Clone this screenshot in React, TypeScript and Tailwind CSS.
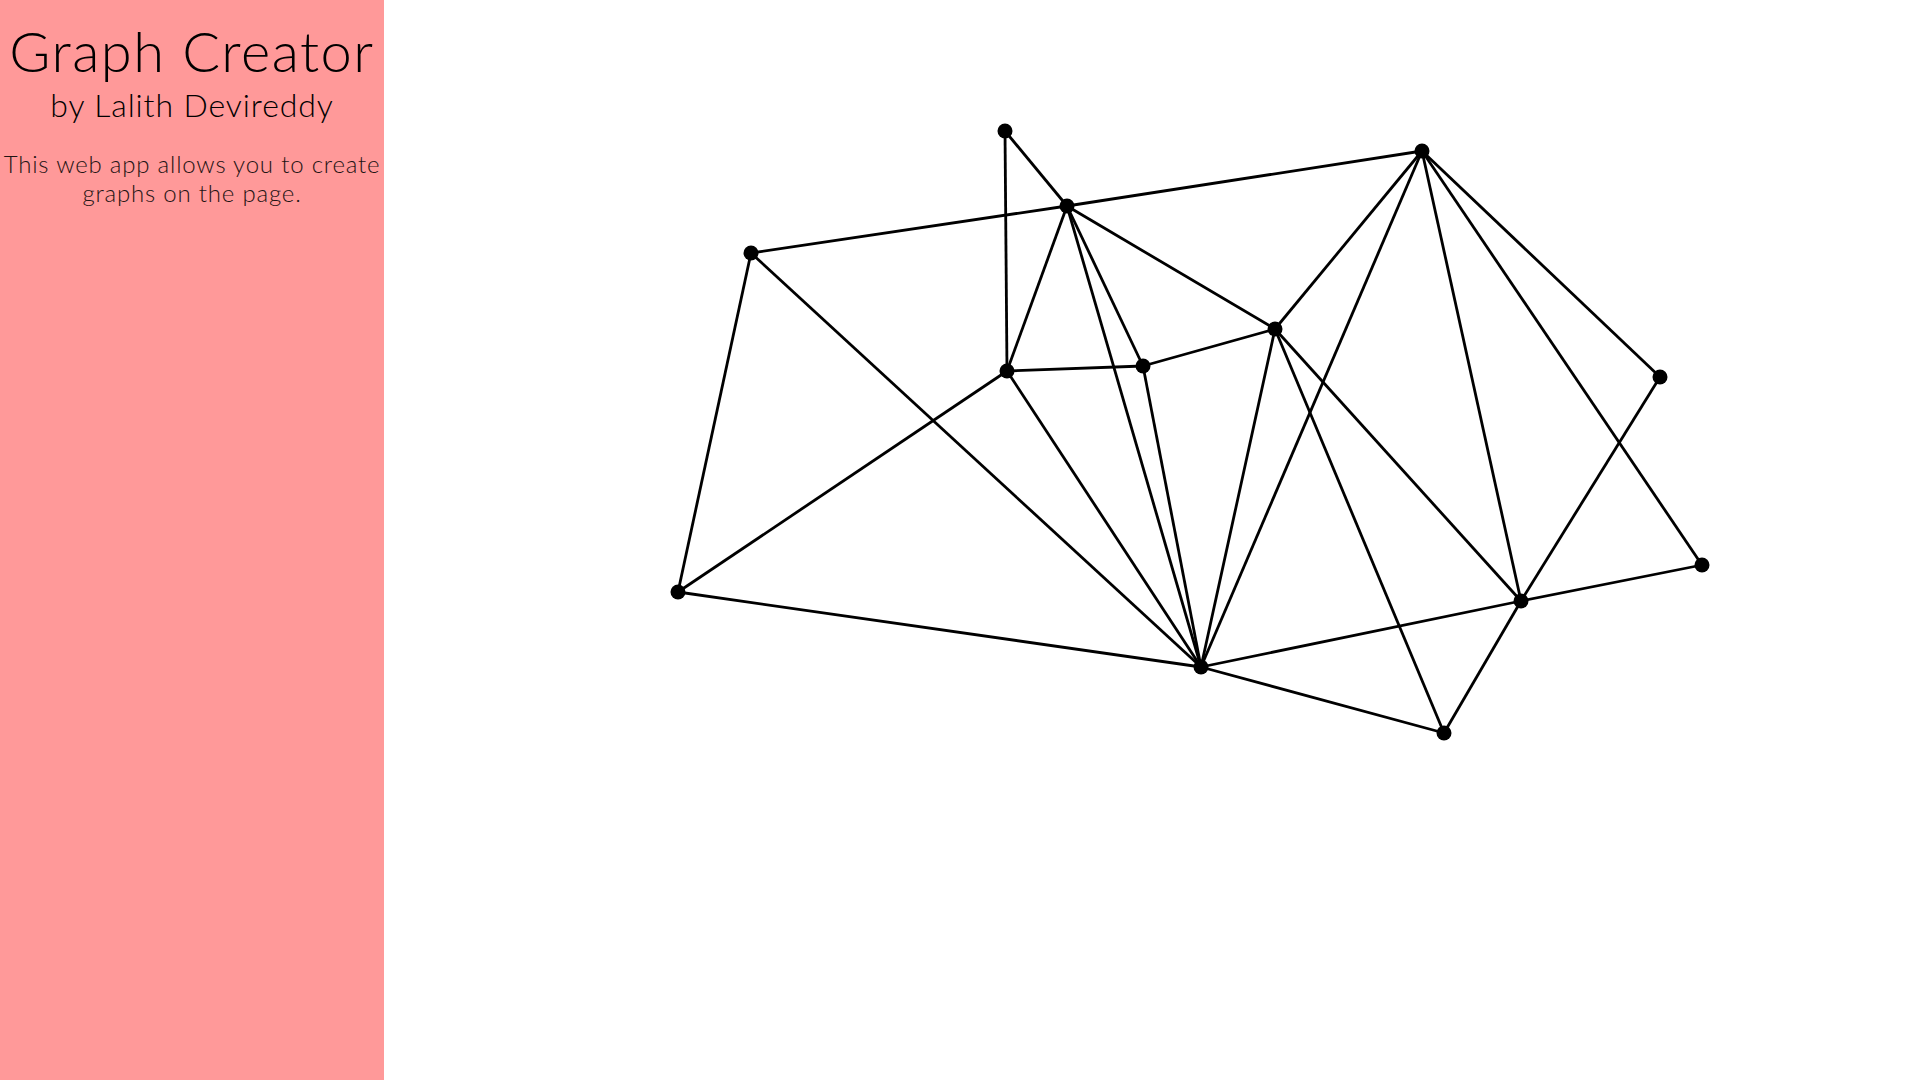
import React from "react";

type Node = { id: string; x: number; y: number };

const NODES: Node[] = [
  { id: "A", x: 1005, y: 131 },
  { id: "B", x: 1067, y: 206 },
  { id: "C", x: 1422, y: 151 },
  { id: "D", x: 751, y: 253 },
  { id: "E", x: 1275, y: 329 },
  { id: "F", x: 1143, y: 366 },
  { id: "G", x: 1007, y: 371 },
  { id: "H", x: 1660, y: 377 },
  { id: "I", x: 678, y: 592 },
  { id: "J", x: 1702, y: 565 },
  { id: "K", x: 1521, y: 601 },
  { id: "L", x: 1201, y: 667 },
  { id: "M", x: 1444, y: 733 },
];

const EDGES: [string, string][] = [
  ["A", "B"], ["A", "G"], ["D", "B"], ["B", "C"], ["B", "G"], ["B", "F"],
  ["B", "L"], ["B", "E"], ["G", "F"], ["G", "I"], ["G", "L"], ["D", "I"],
  ["D", "L"], ["F", "E"], ["F", "L"], ["E", "C"], ["E", "L"], ["E", "M"],
  ["E", "K"], ["C", "L"], ["C", "K"], ["C", "J"], ["C", "H"], ["H", "K"],
  ["K", "M"], ["I", "L"], ["L", "K"], ["K", "J"], ["L", "M"],
];

const byId = Object.fromEntries(NODES.map((n) => [n.id, n]));

function GraphCanvas() {
  return (
    <svg className="block h-full w-full" viewBox="384 0 1536 1080" preserveAspectRatio="xMinYMin meet">
      {EDGES.map(([a, b]) => (
        <line
          key={a + b}
          x1={byId[a].x}
          y1={byId[a].y}
          x2={byId[b].x}
          y2={byId[b].y}
          stroke="#000"
          strokeWidth={2.8}
        />
      ))}
      {NODES.map((n) => (
        <circle key={n.id} cx={n.x} cy={n.y} r={7.5} fill="#000" />
      ))}
    </svg>
  );
}

export default function App() {
  return (
    <div className="flex h-screen w-full bg-white font-['Lato','Noto_Sans',sans-serif]">
      {/* Sidebar */}
      <div className="flex w-[384px] shrink-0 flex-col items-center bg-[#ff9999] pt-[19px] text-center">
        <h1 className="text-[56px] font-light leading-[1.15] tracking-[1.5px] text-black">Graph Creator</h1>
        <h2 className="mt-[3px] text-[32px] font-light leading-[1.2] tracking-[0.9px] text-black">
          by Lalith Devireddy
        </h2>
        <p className="mt-[24px] text-[24px] font-light leading-[29px] tracking-[0.8px] text-[#1f1414]">
          This web app allows you to create graphs on the page.
        </p>
      </div>

      {/* Canvas */}
      <div className="h-full flex-1">
        <GraphCanvas />
      </div>
    </div>
  );
}
